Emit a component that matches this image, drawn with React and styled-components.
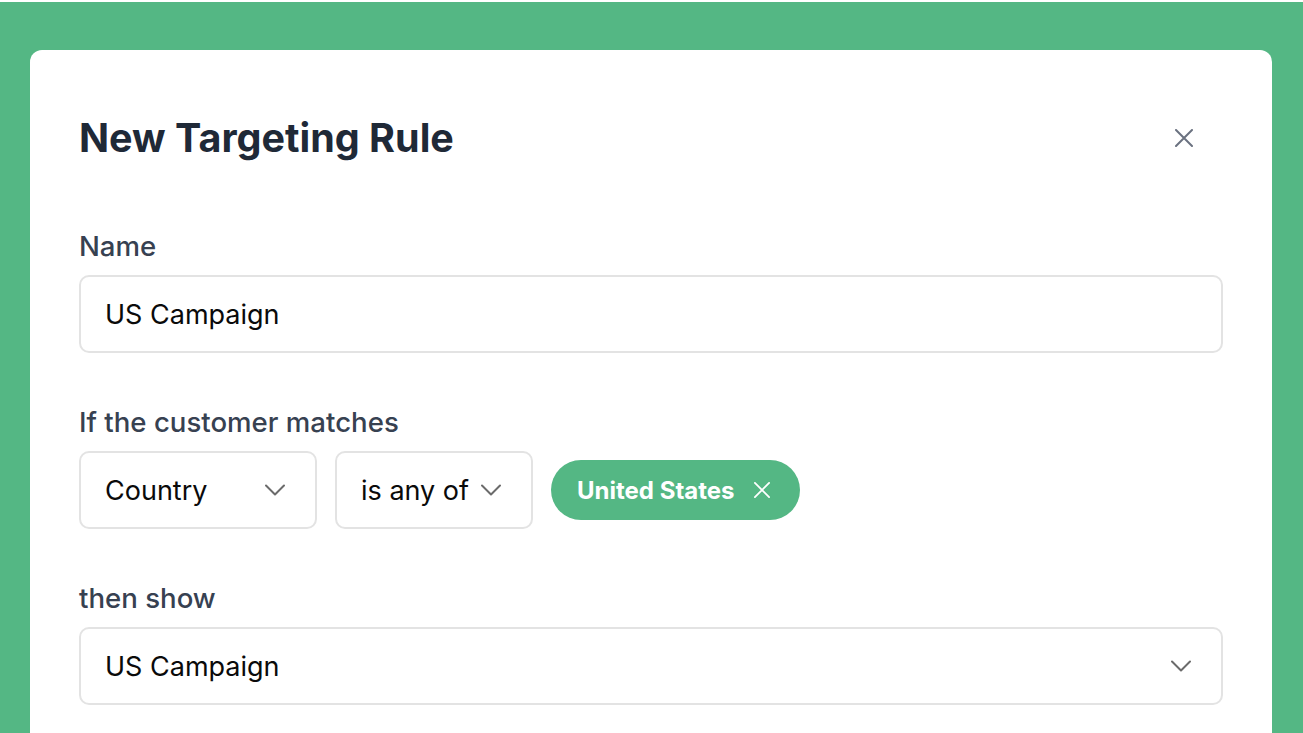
import React from "react";
import styled, { createGlobalStyle } from "styled-components";

const Global = createGlobalStyle`
  html, body { margin: 0; padding: 0; background: #ffffff; overflow: hidden; }
  body { font-family: Inter, "Noto Sans", sans-serif; -webkit-font-smoothing: antialiased; }
  * { box-sizing: border-box; }
`;

const Backdrop = styled.div`
  margin-top: 2px;
  height: 731px;
  background: #54b784;
  padding: 48px 31px 0 30px;
  overflow: hidden;
`;

const Card = styled.div`
  background: #ffffff;
  border-radius: 12px;
  min-height: 900px;
  padding: 66px 49px 40px 49px;
  display: flex;
  flex-direction: column;
`;

const Header = styled.div`
  display: flex;
  align-items: center;
  justify-content: space-between;
  height: 44px;
  margin-bottom: 70px;
`;

const Title = styled.h1`
  margin: 0;
  font-size: 39.5px;
  line-height: 44px;
  font-weight: 700;
  color: #1f2937;
`;

const CloseButton = styled.button`
  width: 40px;
  height: 40px;
  border: none;
  background: transparent;
  padding: 0;
  display: flex;
  align-items: center;
  justify-content: center;
  margin-right: 19px;
  cursor: pointer;
`;

const Field = styled.div`
  display: flex;
  flex-direction: column;
  gap: 13px;
  margin-bottom: ${(p) => (p.$last ? "0" : "53px")};
`;

const Label = styled.label`
  font-size: 27.6px;
  line-height: 32px;
  font-weight: 500;
  color: #374151;
`;

const Box = styled.div`
  height: 78px;
  flex: none;
  border: 2px solid #e3e3e3;
  border-radius: 10px;
  background: #fff;
  display: flex;
  align-items: center;
  justify-content: space-between;
  gap: 12px;
  padding: 0 30px 0 24px;
  font-size: 27px;
  color: #0a0a0a;
  white-space: nowrap;
  width: ${(p) => p.$width || "auto"};

  svg { flex: none; }
`;

const Row = styled.div`
  display: flex;
  align-items: center;
  gap: 18px;
`;

const Chip = styled.div`
  height: 60px;
  border-radius: 30px;
  background: #54b784;
  color: #fff;
  display: flex;
  align-items: center;
  gap: 19px;
  padding: 0 30px 0 26px;
  font-size: 24px;
  font-weight: 700;
  white-space: nowrap;
`;

const Chevron = () => (
  <svg width="20" height="12" viewBox="0 0 20 12" fill="none">
    <path d="M1 1.5 L10 10.5 L19 1.5" stroke="#6b6b6b" strokeWidth="2" strokeLinecap="round" strokeLinejoin="round" />
  </svg>
);

const XIcon = ({ color, size = 18, w = 2 }) => (
  <svg width={size} height={size} viewBox="0 0 18 18" fill="none">
    <path d="M1 1 L17 17 M17 1 L1 17" stroke={color} strokeWidth={w} strokeLinecap="round" />
  </svg>
);

export default function App() {
  return (
    <>
      <Global />
      <Backdrop>
        <Card>
          <Header>
            <Title>New Targeting Rule</Title>
            <CloseButton aria-label="Close">
              <XIcon color="#6b7280" size={18} w={2} />
            </CloseButton>
          </Header>

          <Field>
            <Label>Name</Label>
            <Box>US Campaign</Box>
          </Field>

          <Field>
            <Label>If the customer matches</Label>
            <Row>
              <Box $width="238px">
                Country
                <Chevron />
              </Box>
              <Box $width="198px">
                is any of
                <Chevron />
              </Box>
              <Chip>
                United States
                <XIcon color="#ffffff" size={16} w={2} />
              </Chip>
            </Row>
          </Field>

          <Field $last>
            <Label>then show</Label>
            <Box>
              US Campaign
              <Chevron />
            </Box>
          </Field>
        </Card>
      </Backdrop>
    </>
  );
}
